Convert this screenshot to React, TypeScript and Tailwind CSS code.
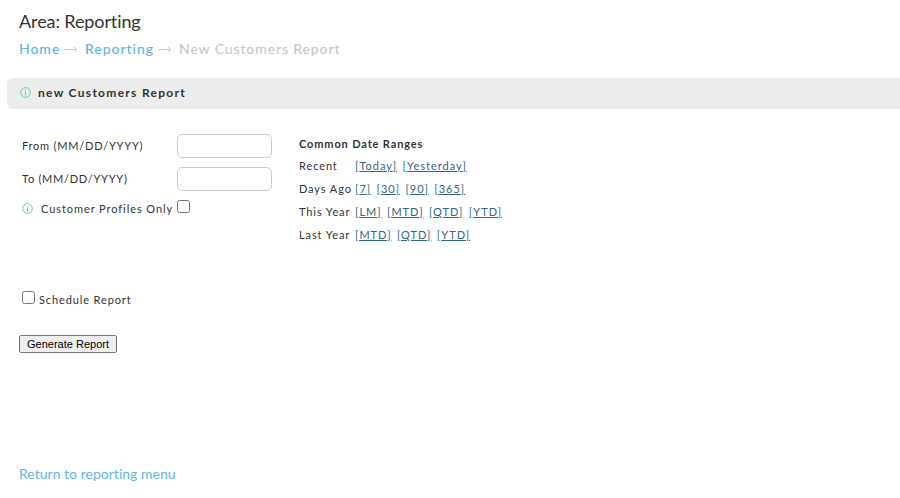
const dateRanges = [
    { label: "Recent", links: ["Today", "Yesterday"] },
    { label: "Days Ago", links: ["7", "30", "90", "365"] },
    { label: "This Year", links: ["LM", "MTD", "QTD", "YTD"] },
    { label: "Last Year", links: ["MTD", "QTD", "YTD"] },
];

const InfoIcon = () => (
    <svg className="w-[11px] h-[11px] shrink-0" viewBox="0 0 11 11" fill="none" stroke="#5fcda0">
        <circle cx="5.5" cy="5.5" r="4.8" strokeWidth="1" />
        <path d="M5.5 2.8v1.1M4.9 5h.6v2.8M4.7 7.8h1.6" strokeWidth="0.9" />
    </svg>
);

const Arrow = () => (
    <svg className="w-[13px] h-[7px] shrink-0" viewBox="0 0 13 7" fill="none" stroke="#c8c8c8">
        <path d="M0 3.5h12.5M10 1l2.5 2.5L10 6" strokeWidth="1" />
    </svg>
);

const checkboxClass =
    "appearance-none block w-[13px] h-[13px] shrink-0 bg-white border border-[#767676] rounded-[2.5px]";
const inputClass = "block w-[95px] h-6 px-2 bg-white border border-[#cccccc] rounded-[5px] outline-none";

export default function App() {
    return (
        <div className="w-full h-[498px] overflow-hidden bg-white font-['Lato',sans-serif] text-[#333333] [font-variant-ligatures:none]">
            <h1 className="pl-[19px] pt-[9px] text-[18px] leading-6 tracking-[-0.1px]">Area: Reporting</h1>

            {/* Breadcrumb */}
            <nav className="flex items-center h-5 mt-[6px] pl-[19px] text-[14px] leading-5 tracking-[0.95px] font-medium text-[#c8c8c8]">
                <a className="w-[45px] text-[#62b5e5]">Home</a>
                <Arrow />
                <a className="w-[73px] ml-2 text-[#62b5e5]">Reporting</a>
                <Arrow />
                <span className="ml-2 tracking-[0.88px] whitespace-nowrap">New Customers Report</span>
            </nav>

            <div className="flex items-center h-[31px] ml-[7px] mt-[19px] pl-[13px] pb-[2px] bg-[#ededed] rounded-l-[6px]">
                <span className="pb-px">
                    <InfoIcon />
                </span>
                <h2 className="ml-[7px] text-[12px] leading-4 font-bold tracking-[1.3px]">new Customers Report</h2>
            </div>

            <div className="flex mt-[25px] pl-[22px] text-[11px] tracking-[1px]">
                <div className="w-[277px]">
                    <label className="flex items-center h-6">
                        <span className="w-[155px] tracking-[0.78px]">From (MM/DD/YYYY)</span>
                        <input className={inputClass} />
                    </label>
                    <label className="flex items-center h-6 mt-[9px]">
                        <span className="w-[155px] tracking-[0.73px]">To (MM/DD/YYYY)</span>
                        <input className={inputClass} />
                    </label>
                    <label className="flex items-center h-4 mt-[9px]">
                        <InfoIcon />
                        <span className="w-[136px] ml-2 pt-[2px] leading-4 tracking-[0.93px] whitespace-nowrap">Customer Profiles Only</span>
                        <input type="checkbox" className={`${checkboxClass} mb-[3px]`} />
                    </label>
                </div>

                {/* Date shortcuts */}
                <div>
                    <h3 className="h-5 leading-5 font-bold tracking-[0.87px]">Common Date Ranges</h3>
                    {dateRanges.map((range) => (
                        <div key={range.label} className="flex h-[23px] leading-[23px]">
                            <span className="w-14 tracking-[0.9px] whitespace-nowrap">{range.label}</span>
                            <span className="flex gap-[5.4px] text-[#336582]">
                                {range.links.map((link) => (
                                    <a key={link} className="underline">[{link}]</a>
                                ))}
                            </span>
                        </div>
                    ))}
                </div>
            </div>

            <label className="flex items-center h-4 mt-[44px] pl-[22px] text-[11px] leading-4 tracking-[0.88px]">
                <input type="checkbox" className={`${checkboxClass} mb-[2px]`} />
                <span className="ml-1 pt-[3px]">Schedule Report</span>
            </label>

            <button className="block w-[98px] h-[18px] ml-[19px] mt-[29px] bg-[#efefef] border border-[#767676] rounded-[2px] font-['Liberation_Sans',sans-serif] text-[11px] leading-4 text-black">
                Generate Report
            </button>

            <a className="block ml-[19px] mt-[111px] text-[14px] leading-5 tracking-[0.02px] text-[#62b5e5]">Return to reporting menu</a>
        </div>
    );
}
